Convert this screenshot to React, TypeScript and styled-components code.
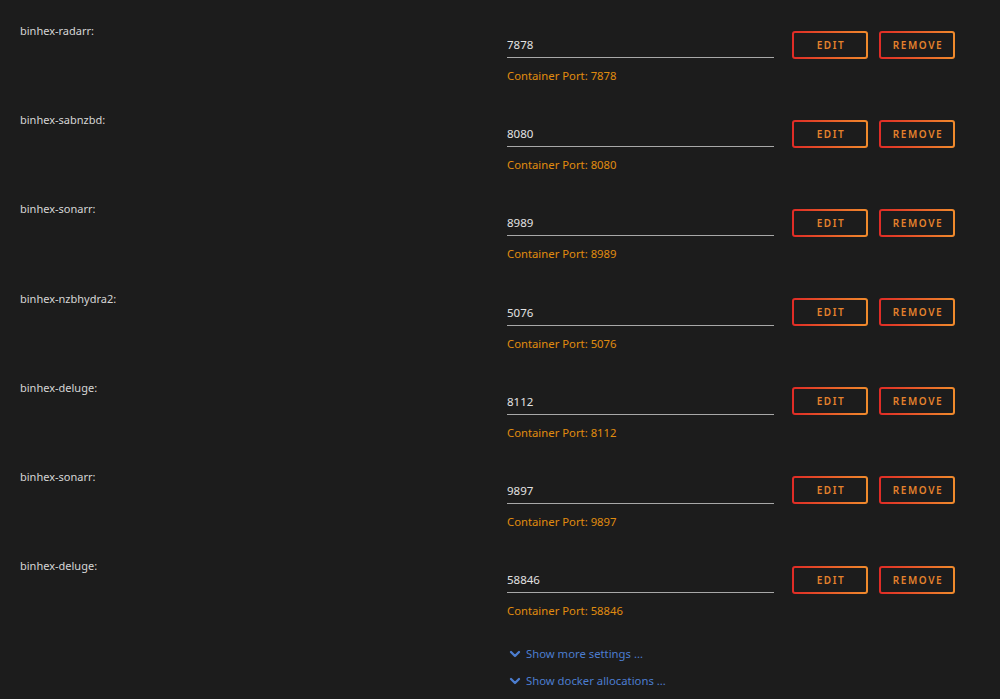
import { createGlobalStyle, styled } from "styled-components";
import { ChevronDown } from "lucide-react";

const GlobalStyle = createGlobalStyle`
  body {
    margin: 0;
    background: #1c1c1c;
    font-family: "Noto Sans", "Open Sans", sans-serif;
  }
`;

const Page = styled.div`
  min-height: 699px;
  padding: 23px 45px 0 20px;
  box-sizing: border-box;
  display: flex;
  flex-direction: column;
  gap: 28.2px;
`;

const Row = styled.div`
  display: grid;
  grid-template-columns: 487px 267px auto;
  align-items: start;
`;

const Label = styled.div`
  font-size: 11px;
  line-height: 16px;
  color: #d6d6d6;
`;

const Field = styled.div`
  display: flex;
  flex-direction: column;
  padding-top: 14px;
`;

const PortInput = styled.input`
  background: transparent;
  border: 0;
  border-bottom: 1.5px solid #a8a8a8;
  outline: none;
  padding: 0 0 4px;
  margin: 0;
  font-family: inherit;
  font-size: 11.5px;
  line-height: 16px;
  color: #e2e2e2;
`;

const Hint = styled.div`
  margin-top: 10px;
  font-size: 11.3px;
  line-height: 16px;
  color: #e08c0f;
`;

const Actions = styled.div`
  display: flex;
  gap: 11px;
  padding: 7.5px 0 0 18px;
`;

const OutlineButton = styled.button<{ $width: number }>`
  width: ${(p) => p.$width}px;
  height: 28px;
  box-sizing: border-box;
  border: 2px solid transparent;
  border-radius: 3px;
  background:
    linear-gradient(#1c1c1c, #1c1c1c) padding-box,
    linear-gradient(90deg, #df2b26, #f08b2c) border-box;
  color: #e5822c;
  font-family: inherit;
  font-size: 10px;
  font-weight: 600;
  letter-spacing: 1.6px;
  padding: 0 0 0 2px;
  cursor: pointer;
`;

const Links = styled.div`
  display: flex;
  flex-direction: column;
  margin: -7px 0 0 487px;
`;

const Toggle = styled.div`
  display: flex;
  align-items: center;
  gap: 3px;
  height: 27px;
  font-size: 11.3px;
  color: #4c7dcf;
  cursor: pointer;
`;

const ports = [
  { name: "binhex-radarr", port: "7878" },
  { name: "binhex-sabnzbd", port: "8080" },
  { name: "binhex-sonarr", port: "8989" },
  { name: "binhex-nzbhydra2", port: "5076" },
  { name: "binhex-deluge", port: "8112" },
  { name: "binhex-sonarr", port: "9897" },
  { name: "binhex-deluge", port: "58846" },
];

export default function App() {
  return (
    <>
      <GlobalStyle />
      <Page>
        {ports.map((p, i) => (
          <Row key={i}>
            <Label>{p.name}:</Label>
            <Field>
              <PortInput readOnly defaultValue={p.port} />
              <Hint>Container Port: {p.port}</Hint>
            </Field>
            <Actions>
              <OutlineButton $width={76}>EDIT</OutlineButton>
              <OutlineButton $width={76}>REMOVE</OutlineButton>
            </Actions>
          </Row>
        ))}
        <Links>
          <Toggle>
            <ChevronDown size={16} strokeWidth={3.5} />
            Show more settings ...
          </Toggle>
          <Toggle>
            <ChevronDown size={16} strokeWidth={3.5} />
            Show docker allocations ...
          </Toggle>
        </Links>
      </Page>
    </>
  );
}
